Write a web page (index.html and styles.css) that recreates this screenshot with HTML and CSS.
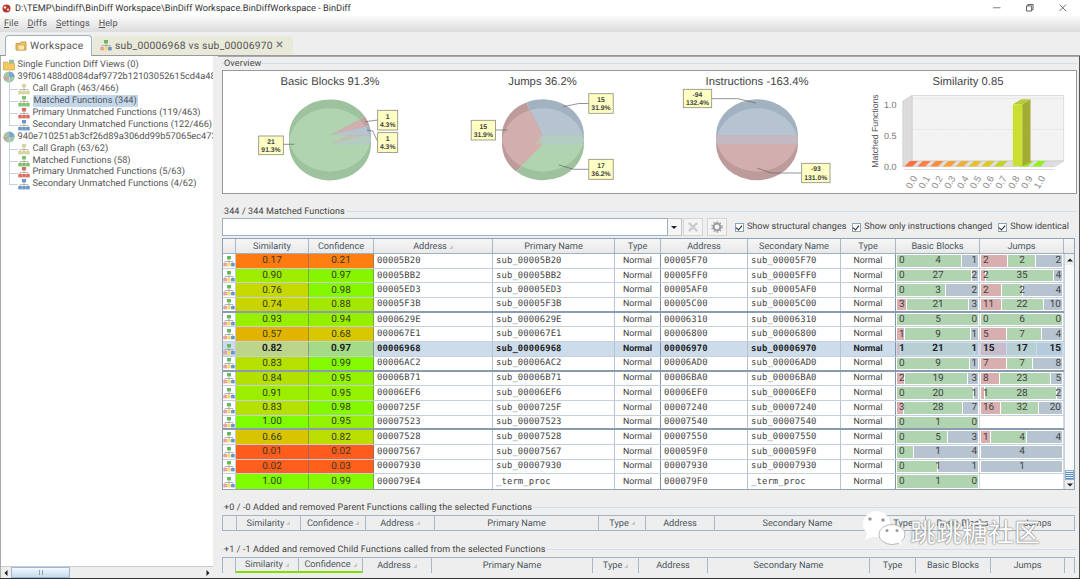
FILE: index.html
```html
<!DOCTYPE html>
<html lang="en">
<head>
<meta charset="utf-8">
<title>BinDiff</title>
<link rel="stylesheet" href="styles.css">
</head>
<body>
<svg class="defs" aria-hidden="true">
  <defs>
    <symbol id="hier" viewBox="0 0 12 12">
      <path d="M6 4V7M2 8V6.5H10V8M6 6.5V8" fill="none" stroke="#a0a090" stroke-width=".7"/>
      <rect x="4" y="1" width="4" height="3.4" fill="currentColor"/>
      <rect x=".3" y="8" width="3.6" height="3.4" fill="currentColor"/>
      <rect x="4.2" y="8" width="3.6" height="3.4" fill="currentColor"/>
      <rect x="8.1" y="8" width="3.6" height="3.4" fill="currentColor"/>
    </symbol>
    <symbol id="hiermulti" viewBox="0 0 12 12">
      <path d="M6 4V7M2 8V6.5H10V8M6 6.5V8" fill="none" stroke="#9a9a9a" stroke-width=".7"/>
      <rect x="4" y="1" width="4" height="3.4" fill="#68b860"/>
      <rect x=".3" y="8" width="3.6" height="3.4" fill="#e8a0a0"/>
      <rect x="4.2" y="8" width="3.6" height="3.4" fill="#f0dc70"/>
      <rect x="8.1" y="8" width="3.6" height="3.4" fill="#6a94cc"/>
    </symbol>
    <symbol id="disc" viewBox="0 0 12 12">
      <circle cx="6" cy="6" r="5.6" fill="#9fc8a8"/>
      <path d="M6 6V.4A5.6 5.6 0 0 1 11.6 6Z" fill="#7ca6cf"/>
      <path d="M6 6L2 10A5.6 5.6 0 0 1 .4 6Z" fill="#d89a9a"/>
    </symbol>
    <symbol id="folder" viewBox="0 0 12 12">
      <path d="M.5 3H4.5L5.5 4.5H11.5V11H.5Z" fill="#f4c862" stroke="#c49a3a" stroke-width=".6"/>
      <path d="M6 .8H11V4H6Z" fill="#8fc0a0"/>
    </symbol>
    <clipPath id="lens"><path d="M66.3 68.8A41 36 0 0 1 147.7 68.8A41 36 0 0 1 66.3 68.8Z"/></clipPath>
    <clipPath id="band"><rect x="0" y="64.3" width="214" height="60"/></clipPath>
    <clipPath id="low"><rect x="0" y="73.3" width="214" height="60"/></clipPath>
    <g id="w-basic-d">
      <path d="M107 64.3L142.1 45.8A41 36 0 1 0 148 64.3Z" fill="#9dc29d"/>
      <path d="M107 64.3L146.5 54.7A41 36 0 0 0 142.1 45.8Z" fill="#c09f9f"/>
      <path d="M107 64.3L148 64.3A41 36 0 0 0 146.5 54.7Z" fill="#a5b2c0"/>
    </g>
    <g id="w-basic-l">
      <path d="M107 64.3L142.1 45.8A41 36 0 1 0 148 64.3Z" fill="#b0d4b0"/>
      <path d="M107 64.3L146.5 54.7A41 36 0 0 0 142.1 45.8Z" fill="#d2aeae"/>
      <path d="M107 64.3L148 64.3A41 36 0 0 0 146.5 54.7Z" fill="#b6c4d2"/>
    </g>
    <g id="w-jumps-d">
      <path d="M107 64.3L148 64.3A41 36 0 0 0 90.3 31.4Z" fill="#a3b2c1"/>
      <path d="M107 64.3L90.3 31.4A41 36 0 0 0 80.3 91.6Z" fill="#bd9b9b"/>
      <path d="M107 64.3L80.3 91.6A41 36 0 0 0 148 64.3Z" fill="#9dc29d"/>
    </g>
    <g id="w-jumps-l">
      <path d="M107 64.3L148 64.3A41 36 0 0 0 90.3 31.4Z" fill="#b6c4d2"/>
      <path d="M107 64.3L90.3 31.4A41 36 0 0 0 80.3 91.6Z" fill="#d2aeae"/>
      <path d="M107 64.3L80.3 91.6A41 36 0 0 0 148 64.3Z" fill="#b0d4b0"/>
    </g>
    <g id="w-instr-d">
      <path d="M66 64.3A41 36 0 0 1 148 64.3Z" fill="#a3b2c1"/>
      <path d="M66 64.3A41 36 0 0 0 148 64.3Z" fill="#bd9b9b"/>
    </g>
    <g id="w-instr-l">
      <path d="M66 64.3A41 36 0 0 1 148 64.3Z" fill="#b6c4d2"/>
      <path d="M66 64.3A41 36 0 0 0 148 64.3Z" fill="#d2aeae"/>
    </g>
  </defs>
</svg>

<div class="window">
  <header class="titlebar">
    <svg class="appicon" viewBox="0 0 9 9"><circle cx="4.5" cy="4.5" r="4" fill="#b8342c"/><circle cx="3" cy="3.4" r="1.2" fill="#fff"/><circle cx="6" cy="5.6" r="1.2" fill="#f4d8d4"/></svg>
    <span class="titletext">D:\TEMP\bindiff\BinDiff Workspace\BinDiff Workspace.BinDiffWorkspace - BinDiff</span>
    <div class="wincontrols">
      <svg viewBox="0 0 8 8"><path d="M0 4H8" stroke="#777" fill="none"/></svg>
      <svg viewBox="0 0 8 8"><path d="M.5 2H6V7.5H.5ZM2 2V.5H7.5V6H6" stroke="#555" fill="none"/></svg>
      <svg viewBox="0 0 8 8"><path d="M.5 .5L7.5 7.5M7.5 .5L.5 7.5" stroke="#666" fill="none"/></svg>
    </div>
  </header>
  <nav class="menubar">
    <span><u>F</u>ile</span><span><u>D</u>iffs</span><span><u>S</u>ettings</span><span><u>H</u>elp</span>
  </nav>
  <div class="tabbar">
    <div class="tab tab-on">
      <svg class="tabicon" viewBox="0 0 12 12"><path d="M1 3.5H5L6 2H11V10H1Z" fill="#f2c66a" stroke="#c08a30" stroke-width=".8"/><path d="M3 5H9.5V10H3Z" fill="#fbe6b0" stroke="#c08a30" stroke-width=".5"/></svg>
      Workspace
    </div>
    <div class="tab tab-off">
      <svg class="tabicon"><use href="#hiermulti"/></svg>
      sub_00006968 vs sub_00006970 <span class="tabclose">×</span>
    </div>
  </div>

  <div class="main">
    <aside class="treepane">
      <div class="tree">
        <div class="tn"><svg class="ti"><use href="#folder"/></svg>Single Function Diff Views (0)</div>
        <div class="tn"><svg class="ti"><use href="#disc"/></svg>39f061488d0084daf9772b12103052615cd4a48</div>
        <div class="tn kid c-call"><svg class="ti"><use href="#hier"/></svg>Call Graph (463/466)</div>
        <div class="tn kid c-match"><svg class="ti"><use href="#hier"/></svg><span class="picked">Matched Functions (344)</span></div>
        <div class="tn kid c-prim"><svg class="ti"><use href="#hier"/></svg>Primary Unmatched Functions (119/463)</div>
        <div class="tn kid c-sec"><svg class="ti"><use href="#hier"/></svg>Secondary Unmatched Functions (122/466)</div>
        <div class="tn"><svg class="ti"><use href="#disc"/></svg>940e710251ab3cf26d89a306dd99b57065ec473</div>
        <div class="tn kid c-call"><svg class="ti"><use href="#hier"/></svg>Call Graph (63/62)</div>
        <div class="tn kid c-match"><svg class="ti"><use href="#hier"/></svg>Matched Functions (58)</div>
        <div class="tn kid c-prim"><svg class="ti"><use href="#hier"/></svg>Primary Unmatched Functions (5/63)</div>
        <div class="tn kid c-sec"><svg class="ti"><use href="#hier"/></svg>Secondary Unmatched Functions (4/62)</div>
      </div>
      <div class="hscroll">
        <span class="arrow arrow-l"></span>
        <span class="hthumb"><i></i></span>
        <span class="htrack"></span>
        <span class="arrow arrow-r"></span>
      </div>
    </aside>
    <div class="vsplit"></div>

    <div class="rightpane">
      <section class="group overview">
        <div class="gtitle"><span>Overview</span></div>
        <div class="charts">
          <svg class="chart" viewBox="0 0 213.25 122">
            <text class="ctitle" x="107" y="14">Basic Blocks 91.3%</text>
            <use href="#w-basic-d"/><use href="#w-basic-d" y="9"/>
            <g clip-path="url(#lens)">
              <use href="#w-basic-l"/>
              <g clip-path="url(#band)" opacity=".5"><use href="#w-basic-l" y="9"/></g>
              <g clip-path="url(#low)"><use href="#w-basic-l" y="9"/></g>
            </g>
            <path class="lead" d="M60.3 73.3H71.3"/>
            <path class="lead" d="M154.7 49L142 50.7"/>
            <path class="lead" d="M155.3 71.7L149.7 60L144 59"/>
            <rect class="lbl" x="35.7" y="65" width="24.6" height="18.7"/>
            <text class="ltxt" x="48" y="73">21</text><text class="ltxt" x="48" y="80.5">91.3%</text>
            <rect class="lbl" x="154.7" y="39.3" width="20" height="19.7"/>
            <text class="ltxt" x="164.7" y="47.5">1</text><text class="ltxt" x="164.7" y="55.5">4.3%</text>
            <rect class="lbl" x="154.7" y="61.7" width="20" height="19.7"/>
            <text class="ltxt" x="164.7" y="70">1</text><text class="ltxt" x="164.7" y="78">4.3%</text>
          </svg>
          <svg class="chart" viewBox="0 0 213.25 122">
            <text class="ctitle" x="106.5" y="14">Jumps 36.2%</text>
            <use href="#w-jumps-d"/><use href="#w-jumps-d" y="9"/>
            <g clip-path="url(#lens)">
              <use href="#w-jumps-l"/>
              <g clip-path="url(#band)" opacity=".5"><use href="#w-jumps-l" y="9"/></g>
              <g clip-path="url(#low)"><use href="#w-jumps-l" y="9"/></g>
            </g>
            <path class="lead" d="M152.8 32.5H142.8L127.2 35.7"/>
            <path class="lead" d="M59.5 59H71.5"/>
            <path class="lead" d="M152.8 98.3H137.8L122.8 94"/>
            <rect class="lbl" x="152.8" y="22.7" width="24.4" height="19.6"/>
            <text class="ltxt" x="165" y="31">15</text><text class="ltxt" x="165" y="39">31.9%</text>
            <rect class="lbl" x="35.2" y="49.3" width="24.3" height="19.7"/>
            <text class="ltxt" x="47.3" y="57.5">15</text><text class="ltxt" x="47.3" y="65.5">31.9%</text>
            <rect class="lbl" x="152.8" y="88.3" width="24.4" height="20"/>
            <text class="ltxt" x="165" y="97">17</text><text class="ltxt" x="165" y="105">36.2%</text>
          </svg>
          <svg class="chart" viewBox="0 0 213.25 122">
            <text class="ctitle" x="107" y="14">Instructions -163.4%</text>
            <use href="#w-instr-d"/><use href="#w-instr-d" y="9"/>
            <g clip-path="url(#lens)">
              <use href="#w-instr-l"/>
              <g clip-path="url(#band)" opacity=".5"><use href="#w-instr-l" y="9"/></g>
              <g clip-path="url(#low)"><use href="#w-instr-l" y="9"/></g>
            </g>
            <path class="lead" d="M61.7 27.7H87.7L106 32"/>
            <path class="lead" d="M151.7 102H121L107 97"/>
            <rect class="lbl" x="33.3" y="18.3" width="28.4" height="18.4"/>
            <text class="ltxt" x="47.5" y="25.5">-94</text><text class="ltxt" x="47.5" y="33.5">132.4%</text>
            <rect class="lbl" x="151.7" y="92.3" width="28.3" height="19.4"/>
            <text class="ltxt" x="165.8" y="100">-93</text><text class="ltxt" x="165.8" y="108.5">131.0%</text>
          </svg>
          <svg class="chart" viewBox="0 0 213.25 122">
            <text class="ctitle" x="105" y="14">Similarity 0.85</text>
            <path d="M39.8 30L49.2 24.3V90L39.8 95.5Z" fill="#dcdcdc" stroke="#c4c4c4" stroke-width=".6"/>
            <rect x="49.2" y="24.3" width="151.6" height="65.7" fill="#f3f3f3" stroke="#cacaca" stroke-width=".6"/>
            <path class="grid" d="M49.2 27.5H200.8M49.2 58.5H200.8M39.8 34L49.2 27.5M39.8 64L49.2 58.5"/>
            <path d="M39.8 95.5L49.2 90H200.8L191.5 95.7Z" fill="#dedede" stroke="#cacaca" stroke-width=".6"/>
            <path d="M41.5 98.5H191.5" stroke="#ddd" stroke-width="1" fill="none"/>
            <path d="M41.5 95.6H49.5L55 90H47Z" fill="#ff7040"/>
            <path d="M54.3 95.6H62.3L67.8 90H59.8Z" fill="#ff8040"/>
            <path d="M67.1 95.6H75.1L80.6 90H72.6Z" fill="#fb8c3c"/>
            <path d="M79.9 95.6H87.9L93.4 90H85.4Z" fill="#f7a03a"/>
            <path d="M92.7 95.6H100.7L106.2 90H98.2Z" fill="#eeb03a"/>
            <path d="M105.5 95.6H113.5L119 90H111Z" fill="#e6c030"/>
            <path d="M118.3 95.6H126.3L131.8 90H123.8Z" fill="#dcc828"/>
            <path d="M131.1 95.6H139.1L144.6 90H136.6Z" fill="#c8d020"/>
            <path d="M156.7 95.6H164.7L170.2 90H162.2Z" fill="#a0e020"/>
            <path d="M169.5 95.6H177.5L183 90H175Z" fill="#90f020"/>
            <path d="M159.2 33.3L167.5 28.3V91L159.2 95Z" fill="#a3ad33"/>
            <path d="M149.8 33.3L158.2 28.3H167.5L159.2 33.3Z" fill="#b8c83a"/>
            <rect x="149.8" y="33.3" width="9.4" height="61.7" fill="#c9e033"/>
            <text class="axis" x="33.5" y="37">1.0</text>
            <text class="axis" x="33.5" y="67.5">0.5</text>
            <text class="axis" x="33.5" y="99">0.0</text>
            <text class="axlabel" transform="translate(14.5 60) rotate(-90)">Matched Functions</text>
            <text class="xt" transform="translate(48 118.5) rotate(-60)">0.0</text>
            <text class="xt" transform="translate(60.8 118.5) rotate(-60)">0.1</text>
            <text class="xt" transform="translate(73.6 118.5) rotate(-60)">0.2</text>
            <text class="xt" transform="translate(86.4 118.5) rotate(-60)">0.3</text>
            <text class="xt" transform="translate(99.2 118.5) rotate(-60)">0.4</text>
            <text class="xt" transform="translate(112 118.5) rotate(-60)">0.5</text>
            <text class="xt" transform="translate(124.8 118.5) rotate(-60)">0.6</text>
            <text class="xt" transform="translate(137.6 118.5) rotate(-60)">0.7</text>
            <text class="xt" transform="translate(150.4 118.5) rotate(-60)">0.8</text>
            <text class="xt" transform="translate(163.2 118.5) rotate(-60)">0.9</text>
            <text class="xt" transform="translate(176 118.5) rotate(-60)">1.0</text>
          </svg>
        </div>
      </section>
      <div class="hsplit"></div>

      <section class="group matched">
        <div class="gtitle"><span>344 / 344 Matched Functions</span></div>
        <div class="filter">
          <div class="finput"></div>
          <div class="fdrop"></div>
          <div class="fbtn"><svg viewBox="0 0 10 10"><path d="M1.5 1.5L8.5 8.5M8.5 1.5L1.5 8.5" stroke="#ccc" stroke-width="2" fill="none"/></svg></div>
          <div class="fbtn f2"><svg viewBox="0 0 12 12"><circle cx="6" cy="6" r="3.4" fill="none" stroke="#999" stroke-width="2"/><circle cx="6" cy="6" r="5" fill="none" stroke="#aaa" stroke-width="1.6" stroke-dasharray="1.6 1.6"/></svg></div>
          <label class="chk c1"><i class="box"></i>Show structural changes</label>
          <label class="chk c2"><i class="box"></i>Show only instructions changed</label>
          <label class="chk c3"><i class="box"></i>Show identical</label>
        </div>
        <div class="table">
          <div class="thead">
            <span></span><span>Similarity</span><span>Confidence</span><span class="sort">Address</span><span>Primary Name</span><span>Type</span><span>Address</span><span>Secondary Name</span><span>Type</span><span>Basic Blocks</span><span>Jumps</span><span></span>
          </div>
          <div class="tbody">
            <div class="rows">
              <div class="row"><span class="ic"><svg><use href="#hiermulti"/></svg></span><span class="num" style="background:#ff7a10">0.17</span><span class="num" style="background:#ff8010">0.21</span><span class="mono">00005B20</span><span class="mono">sub_00005B20</span><span class="ty">Normal</span><span class="mono">00005F70</span><span class="mono">sub_00005F70</span><span class="ty">Normal</span><span class="bar"><span class="segs"><i class="g" style="flex-grow:4"></i><i class="b" style="flex-grow:1"></i></span><span class="nums"><em>0</em><em>4</em><em>1</em></span></span><span class="bar"><span class="segs"><i class="r" style="flex-grow:2"></i><i class="g" style="flex-grow:2"></i><i class="b" style="flex-grow:2"></i></span><span class="nums"><em>2</em><em>2</em><em>2</em></span></span></div>
              <div class="row"><span class="ic"><svg><use href="#hiermulti"/></svg></span><span class="num" style="background:#9eec00">0.90</span><span class="num" style="background:#88f500">0.97</span><span class="mono">00005BB2</span><span class="mono">sub_00005BB2</span><span class="ty">Normal</span><span class="mono">00005FF0</span><span class="mono">sub_00005FF0</span><span class="ty">Normal</span><span class="bar"><span class="segs"><i class="g" style="flex-grow:27"></i><i class="b" style="flex-grow:2"></i></span><span class="nums"><em>0</em><em>27</em><em>2</em></span></span><span class="bar"><span class="segs"><i class="r" style="flex-grow:2"></i><i class="g" style="flex-grow:35"></i><i class="b" style="flex-grow:4"></i></span><span class="nums"><em>2</em><em>35</em><em>4</em></span></span></div>
              <div class="row"><span class="ic"><svg><use href="#hiermulti"/></svg></span><span class="num" style="background:#c5d800">0.76</span><span class="num" style="background:#85f800">0.98</span><span class="mono">00005ED3</span><span class="mono">sub_00005ED3</span><span class="ty">Normal</span><span class="mono">00005AF0</span><span class="mono">sub_00005AF0</span><span class="ty">Normal</span><span class="bar"><span class="segs"><i class="g" style="flex-grow:3"></i><i class="b" style="flex-grow:2"></i></span><span class="nums"><em>0</em><em>3</em><em>2</em></span></span><span class="bar"><span class="segs"><i class="r" style="flex-grow:2"></i><i class="g" style="flex-grow:2"></i><i class="b" style="flex-grow:4"></i></span><span class="nums"><em>2</em><em>2</em><em>4</em></span></span></div>
              <div class="row sep"><span class="ic"><svg><use href="#hiermulti"/></svg></span><span class="num" style="background:#cad400">0.74</span><span class="num" style="background:#a2e800">0.88</span><span class="mono">00005F3B</span><span class="mono">sub_00005F3B</span><span class="ty">Normal</span><span class="mono">00005C00</span><span class="mono">sub_00005C00</span><span class="ty">Normal</span><span class="bar"><span class="segs"><i class="r" style="flex-grow:3"></i><i class="g" style="flex-grow:21"></i><i class="b" style="flex-grow:3"></i></span><span class="nums"><em>3</em><em>21</em><em>3</em></span></span><span class="bar"><span class="segs"><i class="r" style="flex-grow:11"></i><i class="g" style="flex-grow:22"></i><i class="b" style="flex-grow:10"></i></span><span class="nums"><em>11</em><em>22</em><em>10</em></span></span></div>
              <div class="row"><span class="ic"><svg><use href="#hiermulti"/></svg></span><span class="num" style="background:#98ef00">0.93</span><span class="num" style="background:#95f000">0.94</span><span class="mono">0000629E</span><span class="mono">sub_0000629E</span><span class="ty">Normal</span><span class="mono">00006310</span><span class="mono">sub_00006310</span><span class="ty">Normal</span><span class="bar"><span class="segs"><i class="g" style="flex-grow:5"></i></span><span class="nums"><em>0</em><em>5</em><em>0</em></span></span><span class="bar"><span class="segs"><i class="g" style="flex-grow:6"></i></span><span class="nums"><em>0</em><em>6</em><em>0</em></span></span></div>
              <div class="row"><span class="ic"><svg><use href="#hiermulti"/></svg></span><span class="num" style="background:#e2b400">0.57</span><span class="num" style="background:#d8c800">0.68</span><span class="mono">000067E1</span><span class="mono">sub_000067E1</span><span class="ty">Normal</span><span class="mono">00006800</span><span class="mono">sub_00006800</span><span class="ty">Normal</span><span class="bar"><span class="segs"><i class="r" style="flex-grow:1"></i><i class="g" style="flex-grow:9"></i><i class="b" style="flex-grow:1"></i></span><span class="nums"><em>1</em><em>9</em><em>1</em></span></span><span class="bar"><span class="segs"><i class="r" style="flex-grow:5"></i><i class="g" style="flex-grow:7"></i><i class="b" style="flex-grow:4"></i></span><span class="nums"><em>5</em><em>7</em><em>4</em></span></span></div>
              <div class="row selected"><span class="ic"><svg><use href="#hiermulti"/></svg></span><span class="num" style="background:#bcd48c">0.82</span><span class="num" style="background:#a4da88">0.97</span><span class="mono">00006968</span><span class="mono">sub_00006968</span><span class="ty">Normal</span><span class="mono">00006970</span><span class="mono">sub_00006970</span><span class="ty">Normal</span><span class="bar"><span class="segs"><i class="r" style="flex-grow:1"></i><i class="g" style="flex-grow:21"></i><i class="b" style="flex-grow:1"></i></span><span class="nums"><em>1</em><em>21</em><em>1</em></span></span><span class="bar"><span class="segs"><i class="r" style="flex-grow:15"></i><i class="g" style="flex-grow:17"></i><i class="b" style="flex-grow:15"></i></span><span class="nums"><em>15</em><em>17</em><em>15</em></span></span></div>
              <div class="row sep"><span class="ic"><svg><use href="#hiermulti"/></svg></span><span class="num" style="background:#b6e000">0.83</span><span class="num" style="background:#84fa00">0.99</span><span class="mono">00006AC2</span><span class="mono">sub_00006AC2</span><span class="ty">Normal</span><span class="mono">00006AD0</span><span class="mono">sub_00006AD0</span><span class="ty">Normal</span><span class="bar"><span class="segs"><i class="g" style="flex-grow:9"></i><i class="b" style="flex-grow:1"></i></span><span class="nums"><em>0</em><em>9</em><em>1</em></span></span><span class="bar"><span class="segs"><i class="r" style="flex-grow:7"></i><i class="g" style="flex-grow:7"></i><i class="b" style="flex-grow:8"></i></span><span class="nums"><em>7</em><em>7</em><em>8</em></span></span></div>
              <div class="row"><span class="ic"><svg><use href="#hiermulti"/></svg></span><span class="num" style="background:#b4e000">0.84</span><span class="num" style="background:#92f200">0.95</span><span class="mono">00006B71</span><span class="mono">sub_00006B71</span><span class="ty">Normal</span><span class="mono">00006BA0</span><span class="mono">sub_00006BA0</span><span class="ty">Normal</span><span class="bar"><span class="segs"><i class="r" style="flex-grow:2"></i><i class="g" style="flex-grow:19"></i><i class="b" style="flex-grow:3"></i></span><span class="nums"><em>2</em><em>19</em><em>3</em></span></span><span class="bar"><span class="segs"><i class="r" style="flex-grow:8"></i><i class="g" style="flex-grow:23"></i><i class="b" style="flex-grow:5"></i></span><span class="nums"><em>8</em><em>23</em><em>5</em></span></span></div>
              <div class="row"><span class="ic"><svg><use href="#hiermulti"/></svg></span><span class="num" style="background:#9cee00">0.91</span><span class="num" style="background:#92f200">0.95</span><span class="mono">00006EF6</span><span class="mono">sub_00006EF6</span><span class="ty">Normal</span><span class="mono">00006EF0</span><span class="mono">sub_00006EF0</span><span class="ty">Normal</span><span class="bar"><span class="segs"><i class="g" style="flex-grow:20"></i><i class="b" style="flex-grow:1"></i></span><span class="nums"><em>0</em><em>20</em><em>1</em></span></span><span class="bar"><span class="segs"><i class="r" style="flex-grow:1"></i><i class="g" style="flex-grow:28"></i><i class="b" style="flex-grow:2"></i></span><span class="nums"><em>1</em><em>28</em><em>2</em></span></span></div>
              <div class="row"><span class="ic"><svg><use href="#hiermulti"/></svg></span><span class="num" style="background:#b6e000">0.83</span><span class="num" style="background:#85f800">0.98</span><span class="mono">0000725F</span><span class="mono">sub_0000725F</span><span class="ty">Normal</span><span class="mono">00007240</span><span class="mono">sub_00007240</span><span class="ty">Normal</span><span class="bar"><span class="segs"><i class="r" style="flex-grow:3"></i><i class="g" style="flex-grow:28"></i><i class="b" style="flex-grow:7"></i></span><span class="nums"><em>3</em><em>28</em><em>7</em></span></span><span class="bar"><span class="segs"><i class="r" style="flex-grow:16"></i><i class="g" style="flex-grow:32"></i><i class="b" style="flex-grow:20"></i></span><span class="nums"><em>16</em><em>32</em><em>20</em></span></span></div>
              <div class="row sep"><span class="ic"><svg><use href="#hiermulti"/></svg></span><span class="num" style="background:#7ffc00">1.00</span><span class="num" style="background:#92f200">0.95</span><span class="mono">00007523</span><span class="mono">sub_00007523</span><span class="ty">Normal</span><span class="mono">00007540</span><span class="mono">sub_00007540</span><span class="ty">Normal</span><span class="bar"><span class="segs"><i class="g" style="flex-grow:1"></i></span><span class="nums"><em>0</em><em>1</em><em>0</em></span></span><span class="bar"></span></div>
              <div class="row"><span class="ic"><svg><use href="#hiermulti"/></svg></span><span class="num" style="background:#d8c400">0.66</span><span class="num" style="background:#bade00">0.82</span><span class="mono">00007528</span><span class="mono">sub_00007528</span><span class="ty">Normal</span><span class="mono">00007550</span><span class="mono">sub_00007550</span><span class="ty">Normal</span><span class="bar"><span class="segs"><i class="g" style="flex-grow:5"></i><i class="b" style="flex-grow:3"></i></span><span class="nums"><em>0</em><em>5</em><em>3</em></span></span><span class="bar"><span class="segs"><i class="r" style="flex-grow:1"></i><i class="g" style="flex-grow:4"></i><i class="b" style="flex-grow:4"></i></span><span class="nums"><em>1</em><em>4</em><em>4</em></span></span></div>
              <div class="row"><span class="ic"><svg><use href="#hiermulti"/></svg></span><span class="num" style="background:#ff5c1e">0.01</span><span class="num" style="background:#ff5c1e">0.02</span><span class="mono">00007567</span><span class="mono">sub_00007567</span><span class="ty">Normal</span><span class="mono">000059F0</span><span class="mono">sub_000059F0</span><span class="ty">Normal</span><span class="bar"><span class="segs"><i class="g" style="flex-grow:1"></i><i class="b" style="flex-grow:4"></i></span><span class="nums"><em>0</em><em>1</em><em>4</em></span></span><span class="bar"><span class="segs"><i class="b" style="flex-grow:1"></i></span><span class="nums"><em></em><em>4</em><em></em></span></span></div>
              <div class="row"><span class="ic"><svg><use href="#hiermulti"/></svg></span><span class="num" style="background:#ff5e1e">0.02</span><span class="num" style="background:#ff601c">0.03</span><span class="mono">00007930</span><span class="mono">sub_00007930</span><span class="ty">Normal</span><span class="mono">00007930</span><span class="mono">sub_00007930</span><span class="ty">Normal</span><span class="bar"><span class="segs"><i class="g" style="flex-grow:1"></i><i class="b" style="flex-grow:1"></i></span><span class="nums"><em>0</em><em>1</em><em>1</em></span></span><span class="bar"><span class="segs"><i class="b" style="flex-grow:1"></i></span><span class="nums"><em></em><em>1</em><em></em></span></span></div>
              <div class="row"><span class="ic"><svg><use href="#hiermulti"/></svg></span><span class="num" style="background:#7ffc00">1.00</span><span class="num" style="background:#84fa00">0.99</span><span class="mono">000079E4</span><span class="mono">_term_proc</span><span class="ty">Normal</span><span class="mono">000079F0</span><span class="mono">_term_proc</span><span class="ty">Normal</span><span class="bar"><span class="segs"><i class="g" style="flex-grow:1"></i></span><span class="nums"><em>0</em><em>1</em><em>0</em></span></span><span class="bar"></span></div>
            </div>
            <div class="vscroll">
              <span class="arrow arrow-u"></span>
              <span class="vtrack"></span>
              <span class="vthumb"></span>
              <span class="arrow arrow-d"></span>
            </div>
          </div>
        </div>
      </section>
      <div class="hsplit hs2"></div>

      <section class="group parent">
        <div class="gtitle"><span>+0 / -0 Added and removed Parent Functions calling the selected Functions</span></div>
        <div class="minihead mh-parent">
          <span></span><span class="sort">Similarity</span><span class="sort">Confidence</span><span class="sort">Address</span><span>Primary Name</span><span class="sort">Type</span><span>Address</span><span>Secondary Name</span><span>Type</span><span>Basic Blocks</span><span>Jumps</span>
        </div>
      </section>
      <div class="hsplit hs3"></div>

      <section class="group child">
        <div class="gtitle"><span>+1 / -1 Added and removed Child Functions called from the selected Functions</span></div>
        <div class="minihead mh-child">
          <span></span><span class="sort green">Similarity</span><span class="sort green">Confidence</span><span class="sort">Address</span><span>Primary Name</span><span class="sort">Type</span><span>Address</span><span>Secondary Name</span><span>Type</span><span>Basic Blocks</span><span>Jumps</span><span></span>
        </div>
      </section>
    </div>
  </div>

  <div class="watermark">
    <svg class="wechat" viewBox="0 0 44 34">
      <ellipse cx="14.5" cy="13" rx="13.5" ry="13" fill="#fff"/>
      <path d="M5 22L3 29L12 25Z" fill="#fff"/>
      <ellipse cx="30" cy="23.5" rx="13" ry="10" fill="#fff" stroke="#aaa" stroke-width=".8"/>
      <path d="M36 31L40 34L38.5 29Z" fill="#fff"/>
      <circle cx="8" cy="8" r="1.7" fill="#999"/><circle cx="21" cy="9" r="1.7" fill="#999"/>
      <circle cx="25" cy="19.5" r="1.5" fill="#999"/><circle cx="35" cy="19.5" r="1.5" fill="#999"/>
    </svg>
    <span class="wmtext">跳跳糖社区</span>
  </div>
</div>
</body>
</html>
```

FILE: styles.css
```css
* { box-sizing: border-box; }
html, body { margin: 0; padding: 0; }
body {
  width: 1080px;
  height: 579px;
  overflow: hidden;
  background: #eee;
  font-family: Roboto, "Liberation Sans", sans-serif;
  font-size: 10px;
  color: #444;
  text-rendering: geometricPrecision;
}
.defs { position: absolute; width: 0; height: 0; }
.window {
  position: relative;
  width: 1080px;
  height: 579px;
  display: flex;
  flex-direction: column;
  border-bottom: 1px solid #333;
}

/* title + menu */
.titlebar {
  height: 16px;
  flex: none;
  background: #fff;
  display: flex;
  align-items: center;
  padding-left: 2px;
  color: #333;
  font-size: 9.2px;
}
.appicon { width: 9px; height: 9px; margin-right: 4px; }
.wincontrols {
  margin-left: auto;
  display: flex;
  gap: 25.5px;
  padding-right: 13.5px;
}
.wincontrols svg { width: 7.5px; height: 7.5px; }
.menubar {
  height: 16px;
  flex: none;
  display: flex;
  align-items: center;
  gap: 9px;
  padding-left: 4px;
  background: linear-gradient(#fafafa, #dcdcdc);
  font-size: 9px;
  letter-spacing: .1px;
  color: #555;
}
.tabbar {
  height: 24px;
  flex: none;
  display: flex;
  align-items: flex-end;
  padding-left: 5px;
  gap: 1px;
  background: #eee;
  border-bottom: 1px solid #999;
}
.tab {
  height: 20px;
  display: flex;
  align-items: center;
  border-radius: 4px 4px 0 0;
  font-size: 10.3px;
  letter-spacing: .25px;
  color: #555;
  padding-bottom: 1px;
  white-space: nowrap;
}
.tab-on {
  width: 87px;
  padding-left: 9px;
  background: #fff;
  border: 1px solid #9fb0c0;
  border-bottom: 0;
  margin-bottom: -1px;
  height: 21px;
}
.tab-off {
  width: 200px;
  padding-left: 7px;
  background: #e9e9da;
  height: 19px;
}
.tabicon { width: 12px; height: 12px; margin-right: 3px; flex: none; }
.tabclose { margin-left: 3px; font-size: 14px; color: #777; }

/* main split */
.main {
  flex: 1;
  min-height: 0;
  display: flex;
  border-right: 1px solid #555;
}
.treepane {
  width: 213px;
  flex: none;
  display: flex;
  flex-direction: column;
  background: #fff;
  border-left: 1px solid #aaa;
}
.tree {
  flex: 1;
  min-height: 0;
  overflow: hidden;
  padding: 3.5px 0 0 2px;
  white-space: nowrap;
  font-size: 9.25px;
  color: #555;
}
.tn {
  position: relative;
  height: 11.9px;
  line-height: 12px;
  display: flex;
  align-items: center;
}
.ti { width: 12px; height: 12px; margin-right: 2.5px; flex: none; }
.kid { padding-left: 15px; }
.kid::before {
  content: "";
  position: absolute;
  left: 6px;
  top: -6px;
  width: 8px;
  height: 12px;
  border-left: 1px solid #c8d2dc;
  border-bottom: 1px solid #c8d2dc;
}
.c-call .ti { color: #d8d4a0; }
.c-match .ti { color: #80c070; }
.c-prim .ti { color: #dc6c62; }
.c-sec .ti { color: #6a98cc; }
.picked { background: #c4d8ec; padding: 0 1px; }
.hscroll {
  height: 12px;
  flex: none;
  display: flex;
  background: #eee;
  border-top: 1px solid #ccc;
}
.arrow { flex: none; display: block; position: relative; }
.arrow-l, .arrow-r { width: 10px; }
.arrow-l::after, .arrow-r::after, .arrow-u::after, .arrow-d::after {
  content: "";
  position: absolute;
  left: 50%;
  top: 50%;
  border: 3px solid transparent;
  transform: translate(-50%, -50%);
}
.arrow-l::after { border-right-color: #222; border-left-width: 0; }
.arrow-r::after { border-left-color: #222; border-right-width: 0; }
.arrow-u::after { border-bottom-color: #222; border-top-width: 0; }
.arrow-d::after { border-top-color: #222; border-bottom-width: 0; }
.hthumb {
  width: 59px;
  flex: none;
  background: linear-gradient(#f4f8fc, #c4daee);
  border: 1px solid #9cb8d4;
  display: flex;
  align-items: center;
  justify-content: center;
}
.hthumb i { width: 4px; height: 5px; border-left: 1px solid #8aa; border-right: 1px solid #8aa; }
.htrack { flex: 1; }

.vsplit {
  width: 5px;
  flex: none;
  background-color: #eee;
  background-image: radial-gradient(#b0b0b0 .5px, transparent .6px);
  background-size: 2px 2px;
}
.rightpane {
  flex: 1;
  min-width: 0;
  display: flex;
  flex-direction: column;
}
.hsplit {
  height: 5px;
  flex: none;
  background-image: radial-gradient(#aaa .5px, transparent .6px);
  background-size: 2px 2px;
  background-repeat: repeat-x;
  background-position: 0 50%;
}
.group { flex: none; padding: 0 2px 0 4px; }
.gtitle {
  height: 13px;
  line-height: 14px;
  font-size: 9px;
  color: #444;
  letter-spacing: .12px;
  white-space: nowrap;
  background: linear-gradient(transparent 6px, #cfdfee 6px, #cfdfee 7px, transparent 7px);
}
.gtitle span { background: #eee; padding-right: 1px; margin-left: 2px; }

/* overview */
.overview { height: 141px; border-top: 1px solid #aaa; }
.charts {
  height: 124px;
  width: 855px;
  display: flex;
  background: #fff;
  border: 1px solid #999;
}
.chart { flex: 1 1 0; min-width: 0; height: 122px; display: block; }
.ctitle { font: 11.3px "Liberation Sans", sans-serif; fill: #444; text-anchor: middle; }
.lbl { fill: #ffffc4; stroke: #8a8a7a; stroke-width: .8; }
.ltxt { font: bold 6.8px "Liberation Sans", sans-serif; fill: #444; text-anchor: middle; }
.lead { fill: none; stroke: #666; stroke-width: .7; }
.grid { fill: none; stroke: #d8d8d8; stroke-width: .7; stroke-dasharray: 1.5 1.5; }
.axis { font: 9px "Liberation Sans", sans-serif; fill: #777; text-anchor: end; }
.axlabel { font: 8.7px "Liberation Sans", sans-serif; fill: #555; text-anchor: middle; }
.xt { font: 9.5px "Liberation Sans", sans-serif; fill: #888; }

/* matched */
.matched { height: 292px; padding-top: 3px; }
.filter {
  height: 18px;
  display: flex;
  align-items: center;
  margin-bottom: 2px;
}
.finput { width: 446px; height: 18px; flex: none; background: #fff; border: 1px solid #9cb0c4; }
.fdrop {
  width: 14px;
  height: 18px;
  flex: none;
  background: #f6f6f6;
  border: 1px solid #c4c4c4;
  border-left: 0;
  position: relative;
}
.fdrop::after {
  content: "";
  position: absolute;
  left: 3px;
  top: 7px;
  border: 3.5px solid transparent;
  border-top-color: #222;
  border-bottom-width: 0;
}
.fbtn {
  width: 20px;
  height: 18px;
  flex: none;
  margin-left: 1px;
  background: #f4f4f4;
  border: 1px solid #d4d4d4;
  display: flex;
  align-items: center;
  justify-content: center;
}
.f2 { margin-left: 4px; }
.fbtn svg { width: 12px; height: 12px; }
.chk { display: flex; flex: none; align-items: center; font-size: 9.05px; color: #444; white-space: nowrap; }
.c1 { margin-left: 8px; }
.c2 { margin-left: 6px; }
.c3 { margin-left: 6px; }
.box {
  width: 9px;
  height: 9px;
  margin-right: 3px;
  background: #fff;
  border: 1px solid #8aa4bc;
  position: relative;
  display: block;
}
.box::after {
  content: "";
  position: absolute;
  left: 1px;
  top: 0;
  width: 3px;
  height: 5px;
  border: solid #222;
  border-width: 0 1.2px 1.2px 0;
  transform: rotate(40deg);
}
.table {
  width: 853px;
  border: 1px solid #8fa3b6;
  background: #fff;
}
.thead, .row {
  display: grid;
  grid-template-columns: 13px 73px 65px 119px 122px 46px 87px 93px 55px 84px 84px;
}
.thead {
  grid-template-columns: 13px 73px 65px 119px 122px 46px 87px 93px 55px 84px 84px 1fr;
  height: 15px;
  background: linear-gradient(#f6f6f6, #e9e9e9);
  border-bottom: 1px solid #9fb0c0;
}
.thead span {
  display: flex;
  align-items: center;
  justify-content: center;
  font-size: 9.2px;
  padding-top: 1px;
  color: #4a5660;
  border-right: 1px solid #a8b8c6;
}
.thead span:last-child { border-right: 0; }
.sort::after {
  content: "";
  margin-left: 2px;
  border: 2px solid transparent;
  border-bottom-color: #c8c8c8;
  border-right-color: #c8c8c8;
}
.tbody { display: flex; height: 235px; }
.rows {
  width: 841px;
  flex: none;
  display: grid;
  grid-auto-rows: 1fr;
}
.row { min-height: 0; border-bottom: 1px solid #c6d0dc; font-size: 8.8px; color: #444; }
.row.sep { border-bottom: 2px solid #8a9cb2; }
.row:last-child { border-bottom: 0; }
.row > span { display: flex; align-items: center; min-width: 0; overflow: hidden; white-space: nowrap; }
.ic { justify-content: center; border-right: 1px solid #c0ccd8; }
.ic svg { width: 12px; height: 12px; }
.num { justify-content: center; border-right: 1px solid rgba(90, 110, 130, .55); color: #3a3a20; font-size: 10px; }
.mono {
  font-family: "DejaVu Sans Mono", "Liberation Mono", monospace;
  font-size: 8.9px;
  letter-spacing: .12px;
  padding-left: 3px;
  border-right: 1px solid #b6c4d2;
}
.ty { justify-content: center; border-right: 1px solid #7e94ac; }
.selected { background: #cddceb; font-weight: 700; color: #222; }
.selected .num { color: #222; }
.row > .bar { display: grid; padding: 1px; border-right: 1px solid #d8d8d8; }
.segs, .nums { grid-area: 1 / 1; min-width: 0; }
.segs { display: flex; gap: 1px; height: 100%; }
.segs i { flex: 1 1 0; display: block; min-width: 1px; }
.r { background: #d8aeae; }
.g { background: #b0d4b0; }
.b { background: #b6c4d2; }
.selected .r { background: #c8bccb; }
.selected .g { background: #b6cfd2; }
.selected .b { background: #b6cade; }
.nums {
  display: grid;
  grid-template-columns: 1fr auto 1fr;
  align-items: center;
  padding: 0 1px 0 2px;
  font-size: 10px;
  color: #444;
}
.nums em { font-style: normal; }
.nums em:last-child { text-align: right; }
.selected .nums { color: #222; }
.vscroll { flex: 1; display: flex; flex-direction: column; background: #f2f2f2; border-left: 1px solid #c8d0d8; }
.arrow-u { height: 11px; background: #eee; }
.arrow-d { height: 9px; background: #eee; }
.vtrack { flex: 1; background: #fafafa; }
.vthumb {
  height: 10px;
  flex: none;
  border: 1px solid #8cb0d4;
  background: repeating-linear-gradient(#e6f0fa 0 1px, #5c8cc0 1px 2px);
}

/* lower tables */
.hs2 { height: 7px; }
.parent { height: 36px; }
.hs3 { height: 6px; }
.child { height: 35px; }
.minihead {
  width: 853px;
  display: grid;
  background: #eee;
}
.mh-parent {
  grid-template-columns: 14px 64px 65px 69px 164px 47px 69px 166px 45px 74px 75px;
  height: 16px;
  margin-top: 1px;
  border: 1px solid #a4b4c4;
}
.mh-child {
  grid-template-columns: 13px 63px 64px 69px 161px 46px 69px 162px 46px 75px 74px 11px;
  height: 16px;
  margin-top: 1px;
  border: solid #a4b4c4;
  border-width: 1px 1px 0;
}
.minihead span {
  display: flex;
  align-items: center;
  justify-content: center;
  font-size: 9.2px;
  color: #4a5660;
  border-right: 1px solid #a8b8c6;
}
.minihead .green { border-bottom: 2px solid #80e000; }
.minihead span:last-child { border-right: 0; }

/* watermark */
.watermark {
  position: absolute;
  left: 862px;
  top: 511px;
  display: flex;
  align-items: flex-start;
  gap: 4px;
}
.wechat { width: 44px; height: 34px; }
.wmtext {
  font-family: "Noto Sans CJK SC", sans-serif;
  font-size: 26px;
  line-height: 36px;
  color: #fff;
  text-shadow: 0 0 2px #777, 0 0 1px #777;
  margin-top: 3px;
}
```
